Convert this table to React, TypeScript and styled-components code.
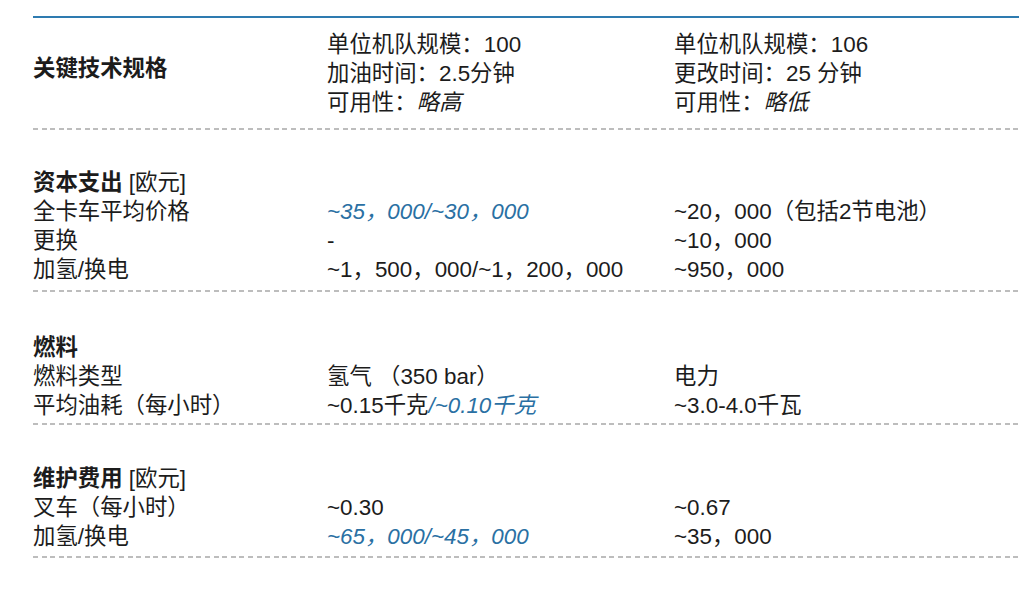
import React from 'react';
import styled, { createGlobalStyle } from 'styled-components';

const GlobalStyle = createGlobalStyle`
  html, body {
    margin: 0;
    padding: 0;
    background: #ffffff;
  }
  body {
    font-family: "Liberation Sans", "Noto Sans CJK SC", sans-serif;
    color: #1c1c1c;
  }
`;

const Page = styled.div`
  padding: 16px 0 0 33px;
  width: 1019px;
  box-sizing: border-box;
`;

const TopRule = styled.div`
  height: 2px;
  background: #2e7bb0;
`;

const Section = styled.section<{ $pt: number; $pb: number }>`
  display: grid;
  grid-template-columns: 294px 347px 1fr;
  font-size: 22.4px;
  line-height: 29px;
  padding: ${(p) => p.$pt}px 0 ${(p) => p.$pb}px;
  white-space: nowrap;
`;

const Divider = styled.div`
  height: 2px;
  background-image: repeating-linear-gradient(
    to right,
    #bdbdbd 0,
    #bdbdbd 5px,
    transparent 5px,
    transparent 8.6px
  );
`;

const SpecLabel = styled.div`
  grid-row: span 3;
  align-self: center;
  font-weight: bold;
  margin-bottom: 10px;
`;

const Stack = styled.div`
  display: flex;
  flex-direction: column;
`;

const Heading = styled.div`
  grid-column: 1 / -1;
  font-weight: bold;

  span {
    font-weight: normal;
  }
`;

const Cell = styled.div``;

const Em = styled.i<{ $blue?: boolean }>`
  font-style: italic;
  color: ${(p) => (p.$blue ? '#2a70a3' : 'inherit')};
`;

type Row = [React.ReactNode, React.ReactNode, React.ReactNode];

const capex: Row[] = [
  ['全卡车平均价格', <Em $blue>~35，000/~30，000</Em>, '~20，000（包括2节电池）'],
  ['更换', '-', '~10，000'],
  ['加氢/换电', '~1，500，000/~1，200，000', '~950，000'],
];

const fuel: Row[] = [
  ['燃料类型', '氢气 （350 bar）', '电力'],
  [
    '平均油耗（每小时）',
    <>
      ~0.15千克<Em $blue>/~0.10千克</Em>
    </>,
    '~3.0-4.0千瓦',
  ],
];

const upkeep: Row[] = [
  ['叉车（每小时）', '~0.30', '~0.67'],
  ['加氢/换电', <Em $blue>~65，000/~45，000</Em>, '~35，000'],
];

const Rows = ({ rows }: { rows: Row[] }) => (
  <>
    {rows.map((r, i) => (
      <React.Fragment key={i}>
        <Cell>{r[0]}</Cell>
        <Cell>{r[1]}</Cell>
        <Cell>{r[2]}</Cell>
      </React.Fragment>
    ))}
  </>
);

export default function App() {
  return (
    <Page>
      <GlobalStyle />
      <TopRule />

      <Section $pt={12} $pb={11}>
        <SpecLabel>关键技术规格</SpecLabel>
        <Stack>
          <Cell>单位机队规模：100</Cell>
          <Cell>加油时间：2.5分钟</Cell>
          <Cell>
            可用性：<Em>略高</Em>
          </Cell>
        </Stack>
        <Stack>
          <Cell>单位机队规模：106</Cell>
          <Cell>更改时间：25 分钟</Cell>
          <Cell>
            可用性：<Em>略低</Em>
          </Cell>
        </Stack>
      </Section>
      <Divider />

      <Section $pt={38} $pb={6}>
        <Heading>
          资本支出 <span>[欧元]</span>
        </Heading>
        <Rows rows={capex} />
      </Section>
      <Divider />

      <Section $pt={41} $pb={3}>
        <Heading>燃料</Heading>
        <Rows rows={fuel} />
      </Section>
      <Divider />

      <Section $pt={39} $pb={5}>
        <Heading>
          维护费用 <span>[欧元]</span>
        </Heading>
        <Rows rows={upkeep} />
      </Section>
      <Divider />
    </Page>
  );
}
